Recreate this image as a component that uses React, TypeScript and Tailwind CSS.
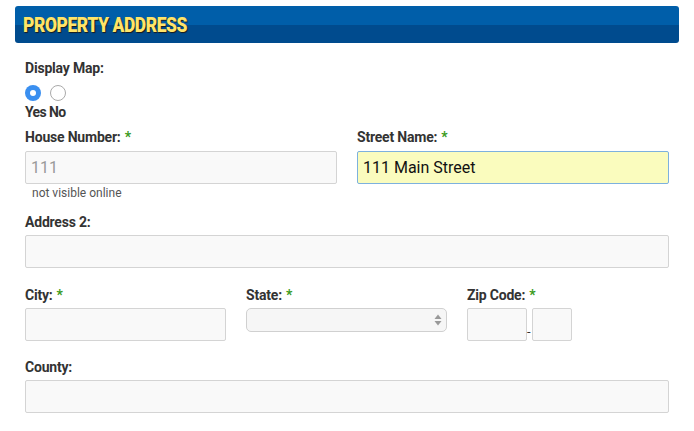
import React from "react";

const Label = ({ children, req }: { children: React.ReactNode; req?: boolean }) => (
  <div className="text-[14px] font-bold text-[#333] leading-[16px] h-[16px] tracking-[-0.2px]">
    {children}
    {req && <span className="text-[#3a9a1a] ml-[4px]">*</span>}
  </div>
);

const inputCls =
  "h-[33px] bg-[#f9f9f9] border border-[#d4d4d4] rounded-[2px] px-[5px] text-[16px] outline-none";

export default function App() {
  return (
    <div
      className="w-[694px] h-[431px] bg-white overflow-hidden pt-[6px] px-[15px]"
      style={{ fontFamily: "Roboto, 'Liberation Sans', sans-serif" }}
    >
      <div className="h-[37px] rounded-[3px] overflow-hidden flex flex-col relative w-[664px]">
        <div className="h-[19px] bg-[#005ea9]" />
        <div className="flex-1 bg-[#004b8e]" />
        <div className="absolute left-[8px] top-[7px] text-[21px] leading-[24px] font-black text-[#ffe469] tracking-[-0.5px] [text-shadow:1px_1px_1px_#1a1a1a] whitespace-nowrap origin-left scale-x-[0.83]">
          PROPERTY ADDRESS
        </div>
      </div>
      <div className="px-[10px]">
        <div className="mt-[17px]">
          <Label>Display Map:</Label>
        </div>
        <div className="flex gap-[9px] mt-[9px]">
          <div className="w-[16px] h-[16px] rounded-full bg-[#3a8ff0] flex items-center justify-center">
            <div className="w-[6px] h-[6px] rounded-full bg-white" />
          </div>
          <div className="w-[16px] h-[16px] rounded-full border border-[#aaa] bg-white" />
        </div>
        <div className="text-[14px] font-bold text-[#333] leading-[16px] mt-[3px] tracking-[-0.6px]">
          Yes No
        </div>
        <div className="flex gap-[20px] mt-[9px]">
          <div className="w-[312px]">
            <Label req>House Number:</Label>
            <div className={`${inputCls} mt-[6px] flex items-center text-[#999]`}>111</div>
            <div className="text-[12px] text-[#555] ml-[7px] mt-[1px] leading-[16px]">not visible online</div>
          </div>
          <div className="w-[312px]">
            <Label req>Street Name:</Label>
            <div className="h-[33px] mt-[6px] bg-[#fafcbe] border border-[#7db1de] rounded-[2px] px-[5px] flex items-center text-[16px] text-[#111]">
              111 Main Street
            </div>
          </div>
        </div>
        <div className="mt-[13px]">
          <Label>Address 2:</Label>
          <div className={`${inputCls} mt-[5px] w-[644px]`} />
        </div>
        <div className="flex mt-[19px]">
          <div className="w-[221px]">
            <Label req>City:</Label>
            <div className={`${inputCls} mt-[5px] w-[201px]`} />
          </div>
          <div className="w-[221px]">
            <Label req>State:</Label>
            <div className="mt-[5px] w-[201px] h-[24px] bg-[#f6f6f6] border border-[#d0d0d0] rounded-[5px] flex items-center justify-end pr-[4px]">
              <svg width="8" height="12" viewBox="0 0 8 12">
                <path d="M4 0.5 L7.5 5 L0.5 5 Z" fill="#999" />
                <path d="M4 11.5 L7.5 7 L0.5 7 Z" fill="#999" />
              </svg>
            </div>
          </div>
          <div>
            <Label req>Zip Code:</Label>
            <div className="flex items-end mt-[5px]">
              <div className={`${inputCls} w-[60px]`} />
              <span className="text-[13px] text-[#333] w-[5px] leading-[14px] mb-[2px]">-</span>
              <div className={`${inputCls} w-[40px]`} />
            </div>
          </div>
        </div>
        <div className="mt-[18px]">
          <Label>County:</Label>
          <div className={`${inputCls} mt-[5px] w-[644px]`} />
        </div>
      </div>
    </div>
  );
}
